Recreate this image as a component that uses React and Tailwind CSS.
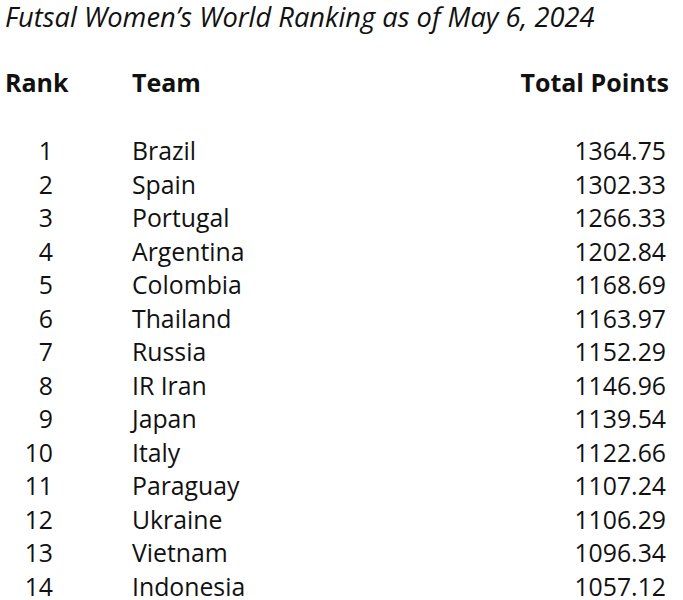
import React from "react";

const rows = [
  [1, "Brazil", "1364.75"],
  [2, "Spain", "1302.33"],
  [3, "Portugal", "1266.33"],
  [4, "Argentina", "1202.84"],
  [5, "Colombia", "1168.69"],
  [6, "Thailand", "1163.97"],
  [7, "Russia", "1152.29"],
  [8, "IR Iran", "1146.96"],
  [9, "Japan", "1139.54"],
  [10, "Italy", "1122.66"],
  [11, "Paraguay", "1107.24"],
  [12, "Ukraine", "1106.29"],
  [13, "Vietnam", "1096.34"],
  [14, "Indonesia", "1057.12"],
];

export default function App() {
  return (
    <div className="w-[683px] h-[600px] bg-white text-[#111]" style={{ fontFamily: '"Open Sans", sans-serif' }}>
      <div className="pl-[5px] text-[27.3px] italic leading-[34px] whitespace-nowrap">Futsal Women’s World Ranking as of May 6, 2024</div>
      <div className="mt-[31px] flex items-center pl-[5px] pr-[14px] text-[25px] font-bold leading-[34px]">
        <div className="w-[127px]">Rank</div>
        <div className="flex-1">Team</div>
        <div>Total Points</div>
      </div>
      <div className="mt-[35px] flex flex-col">
        {rows.map(([r, t, p]) => (
          <div key={r} className="flex items-center text-[24.8px] leading-[33.5px]">
            <div className="w-[53px] text-right">{r}</div>
            <div className="ml-[79px] flex-1">{t}</div>
            <div className="pr-[17px]">{p}</div>
          </div>
        ))}
      </div>
    </div>
  );
}
